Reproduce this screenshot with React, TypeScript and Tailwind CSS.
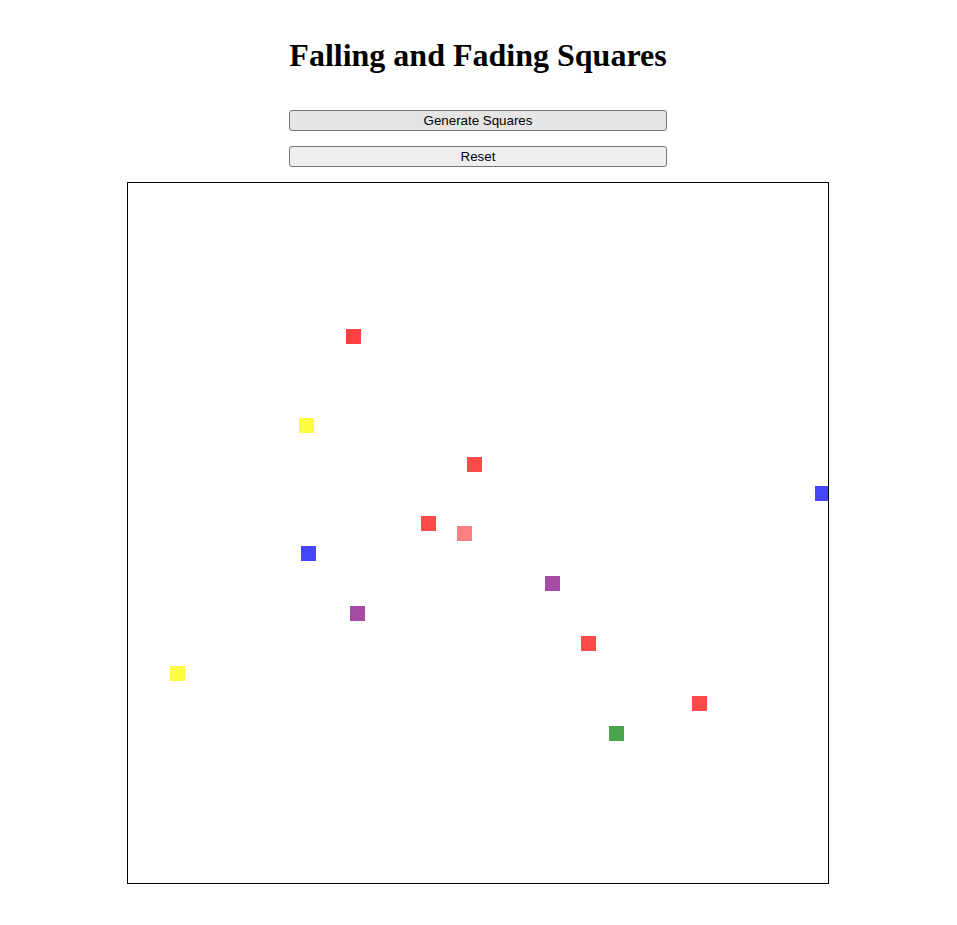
const squares = [
  { x: 218, y: 146, c: "bg-[#ff4040]" },
  { x: 171, y: 235, c: "bg-[#ffff40]" },
  { x: 339, y: 274, c: "bg-[#ff4a4a]" },
  { x: 293, y: 333, c: "bg-[#ff4a4a]" },
  { x: 329, y: 343, c: "bg-[#ff8080]" },
  { x: 173, y: 363, c: "bg-[#4545ff]" },
  { x: 222, y: 423, c: "bg-[#a64ca6]" },
  { x: 417, y: 393, c: "bg-[#a64ca6]" },
  { x: 453, y: 453, c: "bg-[#ff4a4a]" },
  { x: 564, y: 513, c: "bg-[#ff4a4a]" },
  { x: 481, y: 543, c: "bg-[#4aa64a]" },
  { x: 42, y: 483, c: "bg-[#ffff40]" },
  { x: 687, y: 303, c: "bg-[#4545ff]" },
];

export default function App() {
  return (
    <div className="min-h-screen bg-white flex flex-col items-center pr-px">
      <h1 className="mt-[31px] text-[32px] font-bold leading-normal font-['Liberation_Serif',serif] text-black">
        Falling and Fading Squares
      </h1>

      <button className="mt-[31px] w-[378px] h-[21px] bg-[#e5e5e5] border border-[#767676] rounded-[3px] text-[13.33px] font-['Liberation_Sans',Arial,sans-serif] text-black">
        Generate Squares
      </button>
      <button className="mt-[15px] w-[378px] h-[21px] bg-[#efefef] border border-[#767676] rounded-[3px] text-[13.33px] font-['Liberation_Sans',Arial,sans-serif] text-black">
        Reset
      </button>

      <div className="mt-[15px] w-[702px] h-[702px] border border-black relative overflow-hidden">
        {squares.map((s, i) => (
          <div
            key={i}
            className={"absolute w-[15px] h-[15px] " + s.c}
            style={{ left: s.x, top: s.y }}
          />
        ))}
      </div>
    </div>
  );
}
